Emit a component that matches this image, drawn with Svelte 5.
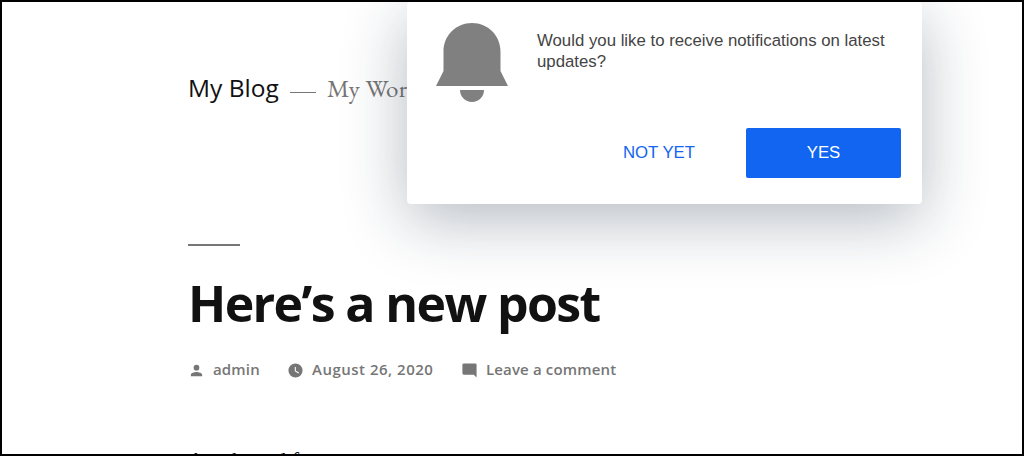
<script>
  const site = { name: "My Blog", tagline: "My WordPress Blog" };
  const post = {
    title: "Here’s a new post",
    author: "admin",
    date: "August 26, 2020",
    excerpt: "Another ad f"
  };
  let asking = $state(true);

  function answer() {
    asking = false;
  }
</script>

<div class="page">
  <header>
    <a class="site" href="#home">{site.name}</a>
    <span class="dash"></span>
    <span class="tagline">{site.tagline}</span>
  </header>

  <article>
    <div class="rule"></div>
    <h1>{post.title}</h1>
    <div class="meta">
      <span class="item author">
        <svg viewBox="0 0 24 24"><path d="M12 12a4 4 0 1 0 0-8 4 4 0 0 0 0 8zm0 2c-2.67 0-8 1.34-8 4v2h16v-2c0-2.66-5.33-4-8-4z" /></svg>
        <span>{post.author}</span>
      </span>
      <span class="item date">
        <svg viewBox="0 0 24 24"><path fill-rule="evenodd" d="M12 2a10 10 0 1 0 0 20 10 10 0 0 0 0-20zm4.2 14.2L11 13V7h1.5v5.2l4.5 2.7z" /></svg>
        <span>{post.date}</span>
      </span>
      <span class="item comment">
        <svg viewBox="0 0 24 24"><path d="M22 4a2 2 0 0 0-2-2H4a2 2 0 0 0-2 2v12c0 1.1.9 2 2 2h14l4 4z" /></svg>
        <span>Leave a comment</span>
      </span>
    </div>
    <p>{post.excerpt}</p>
  </article>

  {#if asking}
    <div class="prompt">
      <div class="body">
        <svg class="bell" viewBox="0 0 74 80">
          <path d="M37 0C21 0 8.500 12.500 8.500 28.500V48L1 63h72l-7.500-15V28.500C65.500 12.500 53 0 37 0z" />
          <path d="M25 67h24c0 6.800-5.300 12-12 12s-12-5.200-12-12z" />
        </svg>
        <div class="message">Would you like to receive notifications on latest updates?</div>
      </div>
      <div class="buttons">
        <button class="no" onclick={answer}>NOT YET</button>
        <button class="yes" onclick={answer}>YES</button>
      </div>
    </div>
  {/if}
</div>

<style>
  .page {
    position: relative;
    box-sizing: border-box;
    width: 1024px;
    height: 456px;
    padding: 69px 0 0 186px;
    border: 2px solid #000;
    overflow: hidden;
    background: #fff;
    color: #111;
  }

  header {
    display: flex;
    height: 34px;
    align-items: center;
    white-space: nowrap;
  }

  .site {
    width: 91px;
    font: 400 24.5px/34px "Open Sans", sans-serif;
    letter-spacing: 0;
    color: #111;
    text-decoration: none;
  }

  .dash {
    width: 26px;
    height: 1px;
    margin: 8px 11px 0;
    background: #767676;
  }

  .tagline {
    font: 25px/34px "EB Garamond", "Liberation Serif", serif;
    letter-spacing: 0.3px;
    color: #767676;
  }

  .rule {
    width: 52px;
    height: 2px;
    margin-top: 139px;
    background: #767676;
  }

  h1 {
    margin: 23px 0 0;
    font: 700 50px/68px "Open Sans", sans-serif;
    letter-spacing: -1.63px;
    white-space: nowrap;
  }

  .meta {
    display: flex;
    height: 24px;
    margin-top: 20px;
    font: 600 15px/24px "Open Sans", sans-serif;
    letter-spacing: 0.15px;
    color: #767676;
    white-space: nowrap;
  }

  .item {
    display: flex;
    align-items: center;
  }

  .item svg {
    width: 17px;
    height: 17px;
    margin: 2px 8px 0 0;
    fill: currentColor;
  }

  .author {
    width: 99px;
  }

  .date {
    width: 174px;
    letter-spacing: 0.5px;
  }

  p {
    margin: 63px 0 0;
    font: 22px/32px "Liberation Serif", serif;
    white-space: nowrap;
  }

  .prompt {
    position: absolute;
    top: 0;
    left: 405px;
    box-sizing: border-box;
    width: 515px;
    height: 202px;
    padding: 21px 21px 26px 28px;
    border-radius: 4px;
    background: #fff;
    box-shadow: 0 16px 64px rgba(25, 45, 65, 0.32);
    font-family: "Liberation Sans", Arial, sans-serif;
  }

  .body {
    display: flex;
    height: 105px;
  }

  .bell {
    width: 74px;
    height: 80px;
    margin-right: 28px;
    flex: none;
    fill: #808080;
  }

  .message {
    width: 360px;
    padding-top: 7px;
    font-size: 16.8px;
    line-height: 21px;
    color: #444;
  }

  .buttons {
    display: flex;
    justify-content: flex-end;
  }

  button {
    height: 50px;
    padding: 0;
    border: 0;
    border-radius: 2px;
    font: 16.8px "Liberation Sans", Arial, sans-serif;
    cursor: pointer;
  }

  .no {
    width: 174px;
    background: none;
    color: #1165f1;
  }

  .yes {
    width: 155px;
    background: #1165f1;
    color: #fff;
  }
</style>
